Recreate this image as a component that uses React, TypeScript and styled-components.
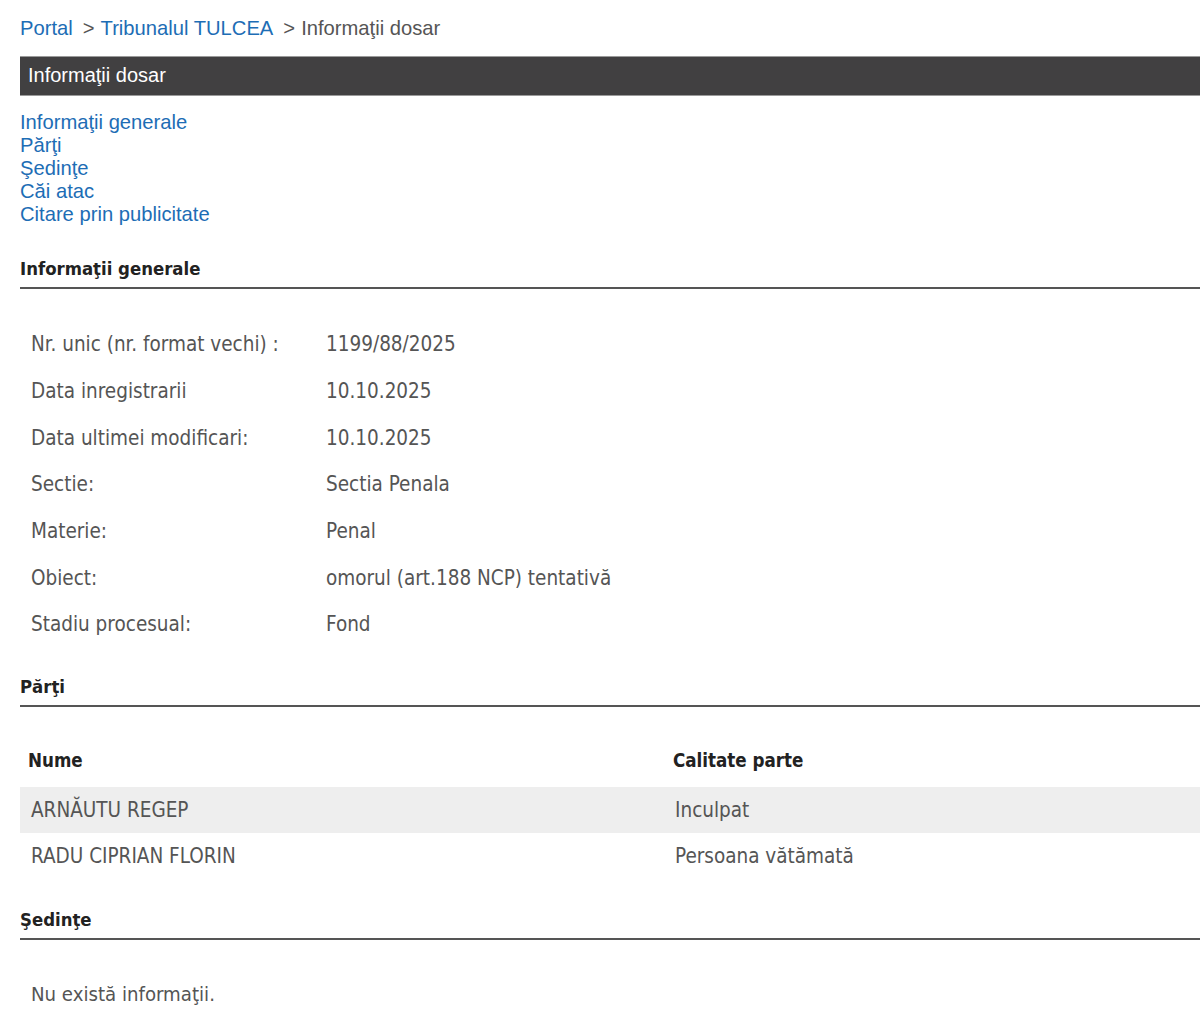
import React from 'react';
import styled, { createGlobalStyle } from 'styled-components';

const GlobalStyle = createGlobalStyle`
    html, body {
        margin: 0;
        padding: 0;
        background: #ffffff;
    }
`

const Page = styled.div`
    padding-left: 20px;
    font-family: "Liberation Sans", Arial, sans-serif;
    overflow: hidden;
`
const Breadcrumb = styled.div`
    display: flex;
    align-items: center;
    margin-top: 16px;
    height: 24px;
    font-size: 20.2px;
    color: #555555;
    white-space: nowrap;
`
const Crumb = styled.a`
    color: #1d6db5;
    text-decoration: none;
`
const Sep = styled.span`
    margin: 0 6px 0 10px;
    color: #555555;
`
const TitleBar = styled.div`
    margin-top: 16px;
    height: 38px;
    line-height: 37px;
    padding-left: 8px;
    background: #414041;
    border-top: 1px solid #9a9a9a;
    border-bottom: 1px solid #9a9a9a;
    color: #ffffff;
    font-size: 20px;
`
const Menu = styled.nav`
    display: flex;
    flex-direction: column;
    margin-top: 15px;
`
const MenuLink = styled.a`
    color: #1d6db5;
    font-size: 20.2px;
    line-height: 23px;
    text-decoration: none;
`
const SectionTitle = styled.h2<{ $gap: number }>`
    margin: ${p => p.$gap}px 0 0 0;
    padding-bottom: 6px;
    border-bottom: 2px solid #555555;
    font-family: "DejaVu Sans Condensed", Tahoma, sans-serif;
    font-weight: bold;
    font-size: 18.4px;
    line-height: 24px;
    color: #222222;
`
const InfoList = styled.div`
    margin-top: 32px;
    font-family: "DejaVu Sans Condensed", Tahoma, sans-serif;
    font-size: 20.5px;
    color: #555555;
`
const InfoRow = styled.div`
    display: grid;
    grid-template-columns: 295px 1fr;
    align-items: center;
    height: 46.67px;
    padding-left: 11px;
`
const PartsTable = styled.div`
    margin-top: 34px;
    font-family: "DejaVu Sans Condensed", Tahoma, sans-serif;
    font-size: 20.5px;
`
const PartsRow = styled.div<{ $shaded?: boolean }>`
    display: grid;
    grid-template-columns: 645px 1fr;
    align-items: center;
    height: 46px;
    background: ${p => (p.$shaded ? '#eeeeee' : 'transparent')};
    color: #555555;
`
const HeadCell = styled.div`
    padding-left: 8px;
    padding-bottom: 6px;
    font-weight: bold;
    font-size: 18.6px;
    color: #222222;
`
const Cell = styled.div<{ $pad: number }>`
    padding-left: ${p => p.$pad}px;
`
const Empty = styled.p`
    margin: 42px 0 0 11px;
    font-family: "DejaVu Sans Condensed", Tahoma, sans-serif;
    font-size: 20.2px;
    line-height: 24px;
    color: #555555;
`

const info = [
    ['Nr. unic (nr. format vechi) :', '1199/88/2025'],
    ['Data inregistrarii', '10.10.2025'],
    ['Data ultimei modificari:', '10.10.2025'],
    ['Sectie:', 'Sectia Penala'],
    ['Materie:', 'Penal'],
    ['Obiect:', 'omorul (art.188 NCP) tentativă'],
    ['Stadiu procesual:', 'Fond'],
];

const parti = [
    ['ARNĂUTU REGEP', 'Inculpat'],
    ['RADU CIPRIAN FLORIN', 'Persoana vătămată'],
];

const App = () => {
    return (
        <>
            <GlobalStyle />
            <Page>
                <Breadcrumb>
                    <Crumb href="#">Portal</Crumb>
                    <Sep>&gt;</Sep>
                    <Crumb href="#">Tribunalul TULCEA</Crumb>
                    <Sep>&gt;</Sep>
                    <span>Informaţii dosar</span>
                </Breadcrumb>
                <TitleBar>Informaţii dosar</TitleBar>
                <Menu>
                    <MenuLink href="#">Informaţii generale</MenuLink>
                    <MenuLink href="#">Părţi</MenuLink>
                    <MenuLink href="#">Şedinţe</MenuLink>
                    <MenuLink href="#">Căi atac</MenuLink>
                    <MenuLink href="#">Citare prin publicitate</MenuLink>
                </Menu>

                <SectionTitle $gap={31}>Informaţii generale</SectionTitle>
                <InfoList>
                    {info.map(([label, value]) => (
                        <InfoRow key={label}>
                            <span>{label}</span>
                            <span>{value}</span>
                        </InfoRow>
                    ))}
                </InfoList>

                <SectionTitle $gap={27}>Părţi</SectionTitle>
                <PartsTable>
                    <PartsRow>
                        <HeadCell>Nume</HeadCell>
                        <HeadCell>Calitate parte</HeadCell>
                    </PartsRow>
                    {parti.map(([name, role], i) => (
                        <PartsRow key={name} $shaded={i % 2 === 0}>
                            <Cell $pad={11}>{name}</Cell>
                            <Cell $pad={10}>{role}</Cell>
                        </PartsRow>
                    ))}
                </PartsTable>

                <SectionTitle $gap={29}>Şedinţe</SectionTitle>
                <Empty>Nu există informaţii.</Empty>
            </Page>
        </>
    );
};

export default App;
